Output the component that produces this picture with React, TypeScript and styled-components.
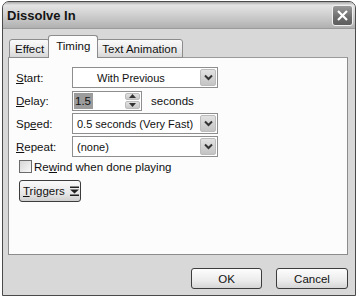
import styled, { createGlobalStyle } from 'styled-components';

const GlobalStyle = createGlobalStyle`
    html, body {
        margin: 0;
        padding: 0;
        background: #ffffff;
    }
    body {
        font-family: "Liberation Sans", Arial, sans-serif;
        font-size: 11px;
        color: #111;
        white-space: nowrap;
    }
`;

const Window = styled.div`
    box-sizing: border-box;
    margin: 1px 0 0 2px;
    width: 354px;
    height: 295px;
    border: 1px solid #4a4a4a;
    border-radius: 7px 7px 0 0;
    background: #d8d8d8;
    display: flex;
    flex-direction: column;
    overflow: hidden;
`;

const TitleBar = styled.div`
    height: 26px;
    display: flex;
    align-items: center;
    justify-content: space-between;
    padding: 0 2px 0 4px;
    background: linear-gradient(#a8a8a8 0%, #e4e4e4 12%, #d2d2d2 45%, #bdbdbd 80%, #b0b0b0 100%);
    border-bottom: 1px solid #9a9a9a;
`;

const Title = styled.span`
    font-weight: 700;
    font-size: 13px;
    color: #141414;
`;

const CloseButton = styled.div`
    width: 21px;
    height: 21px;
    box-sizing: border-box;
    border: 1px solid #f0f0f0;
    border-radius: 3px;
    background: linear-gradient(#9a9a9a, #6c6c6c 60%, #5e5e5e);
    display: flex;
    align-items: center;
    justify-content: center;
`;

const Body = styled.div`
    flex: 1;
    display: flex;
    flex-direction: column;
    padding: 7px 7px 0 5px;
`;

const TabRow = styled.div`
    display: flex;
    align-items: flex-end;
    height: 22px;
    padding-left: 1px;
    position: relative;
    z-index: 1;
    margin-bottom: -1px;
`;

const Tab = styled.div<{ $active?: boolean }>`
    box-sizing: border-box;
    height: ${(p) => (p.$active ? 23 : 19)}px;
    padding: 0 ${(p) => (p.$active ? 7 : 5)}px;
    margin: 0 ${(p) => (p.$active ? -2 : 0)}px;
    display: flex;
    align-items: center;
    font-size: 11.5px;
    border: 1px solid #8c8c8c;
    border-bottom: ${(p) => (p.$active ? 'none' : '1px solid #8c8c8c')};
    border-radius: 3px 3px 0 0;
    background: ${(p) => (p.$active ? '#fcfcfc' : 'linear-gradient(#fafafa, #e6e6e6 70%, #d6d6d6)')};
    position: relative;
    z-index: ${(p) => (p.$active ? 2 : 1)};
    padding-bottom: ${(p) => (p.$active ? 3 : 0)}px;
`;

const Panel = styled.div`
    box-sizing: border-box;
    height: 198px;
    background: #fcfcfc;
    border: 1px solid #8c8c8c;
    border-top-color: #9a9a9a;
    padding: 8px 0 0 7px;
    display: flex;
    flex-direction: column;
`;

const FieldGrid = styled.div`
    display: grid;
    grid-template-columns: 56px auto;
    grid-auto-rows: 23px;
    align-items: center;
`;

const Label = styled.span`
    font-size: 11.5px;
`;

const Select = styled.div<{ $centered?: boolean }>`
    box-sizing: border-box;
    width: 146px;
    height: 21px;
    border: 1px solid #8e8e8e;
    background: #fff;
    display: flex;
    align-items: center;
    justify-content: space-between;
    padding: 0 1px 0 ${(p) => (p.$centered ? 24 : 4)}px;
    font-size: 11px;
`;

const ArrowButton = styled.div`
    box-sizing: border-box;
    width: 16px;
    height: 17px;
    border: 1px solid #bcbcbc;
    border-radius: 2px;
    background: linear-gradient(#e2e2e2, #c4c4c4);
    display: flex;
    align-items: center;
    justify-content: center;
`;

const SpinRow = styled.div`
    display: flex;
    align-items: center;
    gap: 9px;
    font-size: 11.5px;
`;

const SpinBox = styled.div`
    box-sizing: border-box;
    width: 70px;
    height: 20px;
    border: 1px solid #8e8e8e;
    background: #fff;
    display: flex;
    align-items: center;
    justify-content: space-between;
    padding: 1px;
`;

const Selected = styled.span`
    background: #9c9c9c;
    color: #111;
    padding: 1px 2px 1px 1px;
    font-size: 11.5px;
    line-height: 14px;
`;

const Spinner = styled.div`
    display: flex;
    flex-direction: column;
    gap: 1px;
    height: 16px;
`;

const SpinHalf = styled.div`
    box-sizing: border-box;
    width: 15px;
    height: 8px;
    border: 1px solid #bcbcbc;
    border-radius: 2px;
    background: linear-gradient(#e2e2e2, #c8c8c8);
    display: flex;
    align-items: center;
    justify-content: center;
`;

const CheckRow = styled.label`
    display: flex;
    align-items: center;
    gap: 2px;
    margin: 2px 0 0 3px;
    font-size: 11.5px;
`;

const CheckBox = styled.span`
    box-sizing: border-box;
    width: 13px;
    height: 13px;
    border: 1px solid #6a6a6a;
    background: linear-gradient(135deg, #d6d6d6, #f8f8f8);
`;

const TriggersButton = styled.div`
    box-sizing: border-box;
    align-self: flex-start;
    margin: 7px 0 0 3px;
    width: 62px;
    height: 22px;
    border: 1px solid #3c3c3c;
    border-radius: 3px;
    background: linear-gradient(#fafafa, #e8e8e8 60%, #cfcfcf);
    display: flex;
    align-items: center;
    gap: 5px;
    padding-left: 3px;
    font-size: 11.5px;
`;

const Footer = styled.div`
    display: flex;
    justify-content: flex-end;
    gap: 14px;
    padding: 13px 0 0 0;
`;

const DialogButton = styled.div<{ $w: number }>`
    box-sizing: border-box;
    width: ${(p) => p.$w}px;
    height: 21px;
    border: 1px solid #3c3c3c;
    border-radius: 3px;
    background: linear-gradient(#fdfdfd, #ececec 60%, #d6d6d6);
    display: flex;
    align-items: center;
    justify-content: center;
    font-size: 11.5px;
`;

const Chevron = () => (
    <svg width="9" height="7" viewBox="0 0 9 7">
        <path d="M1 1.5 L4.5 5 L8 1.5" fill="none" stroke="#333" strokeWidth="2" />
    </svg>
);

const SpinArrow = ({ up }: { up?: boolean }) => (
    <svg width="7" height="4" viewBox="0 0 7 4">
        <path d={up ? 'M0 4 L3.5 0 L7 4 Z' : 'M0 0 L3.5 4 L7 0 Z'} fill="#333" />
    </svg>
);

const App = () => {
    return (
        <>
            <GlobalStyle />
            <Window>
                <TitleBar>
                    <Title>Dissolve In</Title>
                    <CloseButton>
                        <svg width="13" height="13" viewBox="0 0 13 13">
                            <path d="M2 2 L11 11 M11 2 L2 11" stroke="#fff" strokeWidth="2.2" />
                        </svg>
                    </CloseButton>
                </TitleBar>
                <Body>
                    <TabRow>
                        <Tab>Effect</Tab>
                        <Tab $active>Timing</Tab>
                        <Tab>Text Animation</Tab>
                    </TabRow>
                    <Panel>
                        <FieldGrid>
                            <Label><u>S</u>tart:</Label>
                            <Select $centered>
                                With Previous
                                <ArrowButton><Chevron /></ArrowButton>
                            </Select>
                            <Label><u>D</u>elay:</Label>
                            <SpinRow>
                                <SpinBox>
                                    <Selected>1.5</Selected>
                                    <Spinner>
                                        <SpinHalf><SpinArrow up /></SpinHalf>
                                        <SpinHalf><SpinArrow /></SpinHalf>
                                    </Spinner>
                                </SpinBox>
                                seconds
                            </SpinRow>
                            <Label>Sp<u>e</u>ed:</Label>
                            <Select>
                                0.5 seconds (Very Fast)
                                <ArrowButton><Chevron /></ArrowButton>
                            </Select>
                            <Label><u>R</u>epeat:</Label>
                            <Select>
                                (none)
                                <ArrowButton><Chevron /></ArrowButton>
                            </Select>
                        </FieldGrid>
                        <CheckRow>
                            <CheckBox />
                            <span>Re<u>w</u>ind when done playing</span>
                        </CheckRow>
                        <TriggersButton>
                            <span><u>T</u>riggers</span>
                            <svg width="9" height="10" viewBox="0 0 9 10">
                                <path d="M0 0.5 H9 V2 H0 Z M0 3.5 L4.5 7.5 L9 3.5 Z M0 8.5 H9 V10 H0 Z" fill="#222" />
                            </svg>
                        </TriggersButton>
                    </Panel>
                    <Footer>
                        <DialogButton $w={71}>OK</DialogButton>
                        <DialogButton $w={72}>Cancel</DialogButton>
                    </Footer>
                </Body>
            </Window>
        </>
    );
};

export default App;
